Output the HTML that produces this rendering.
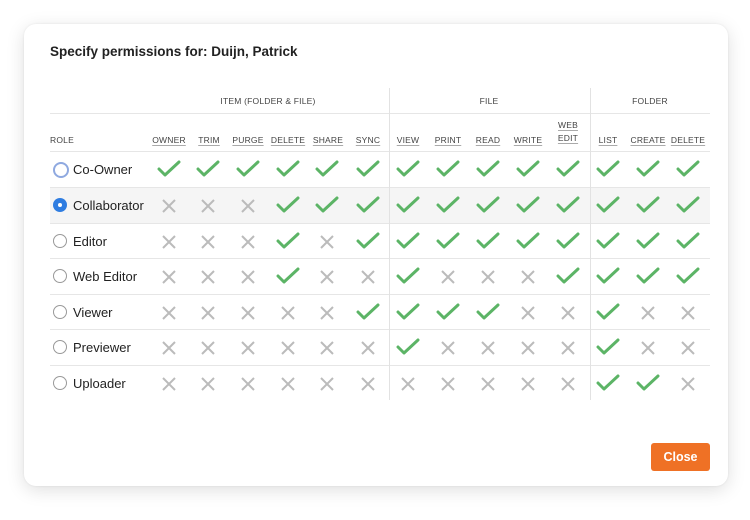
<!DOCTYPE html>
<html><head><meta charset="utf-8"><style>
*{margin:0;padding:0;box-sizing:border-box}
body{width:750px;height:520px;background:#fff;font-family:"Liberation Sans",sans-serif;position:relative;overflow:hidden}
.dlg{position:absolute;left:24px;top:24px;width:704px;height:462px;background:#fff;border-radius:12px;box-shadow:0 4px 18px rgba(0,0,0,.13),0 0 2px rgba(0,0,0,.08)}
.t{position:absolute;left:50px;top:44px;font-size:13.5px;font-weight:bold;color:#222}
.h{position:absolute;font-size:8.5px;color:#444;text-align:center;letter-spacing:.2px;transform:translateX(-50%);white-space:nowrap}
.u{text-decoration:underline;text-decoration-color:#aaa;text-underline-offset:2px}
.line{position:absolute;left:50px;width:660px;height:1px;background:#e6e6e6}
.vl{position:absolute;width:1px;background:#e2e2e2;top:88px;height:312px}
.row{position:absolute;left:50px;width:660px;height:36px}
.rad{position:absolute;left:3px;top:11px;width:14px;height:14px;border:1px solid #999;border-radius:50%;background:#fff}
</style></head><body>
<svg width="0" height="0" style="position:absolute"><defs>
<symbol id="c" viewBox="0 0 24 18"><path d="M2 9 L8 15 L22 2" fill="none" stroke="#5cb466" stroke-width="3" stroke-linecap="round" stroke-linejoin="round"/></symbol>
<symbol id="x" viewBox="0 0 14 14"><path d="M1 1 L13 13 M13 1 L1 13" fill="none" stroke="#bbb" stroke-width="2"/></symbol>
</defs></svg>
<div class="dlg"></div>
<div class="t">Specify permissions for: Duijn, Patrick</div>
<div class="h" style="left:268px;top:96px">ITEM (FOLDER &amp; FILE)</div>
<div class="h" style="left:489px;top:96px">FILE</div>
<div class="h" style="left:650px;top:96px">FOLDER</div>
<div class="line" style="top:113px"></div>
<div class="h" style="left:62px;top:135px">ROLE</div>
<div class="h u" style="left:169px;top:135px">OWNER</div>
<div class="h u" style="left:209px;top:135px">TRIM</div>
<div class="h u" style="left:248px;top:135px">PURGE</div>
<div class="h u" style="left:288px;top:135px">DELETE</div>
<div class="h u" style="left:328px;top:135px">SHARE</div>
<div class="h u" style="left:368px;top:135px">SYNC</div>
<div class="h u" style="left:408px;top:135px">VIEW</div>
<div class="h u" style="left:448px;top:135px">PRINT</div>
<div class="h u" style="left:488px;top:135px">READ</div>
<div class="h u" style="left:528px;top:135px">WRITE</div>
<div class="h u" style="left:568px;top:119px;line-height:13px">WEB<br>EDIT</div>
<div class="h u" style="left:608px;top:135px">LIST</div>
<div class="h u" style="left:648px;top:135px">CREATE</div>
<div class="h u" style="left:688px;top:135px">DELETE</div>
<div class="line" style="top:151px"></div>
<div class="row" style="top:187px;height:36px;background:#f5f5f5"></div>
<div class="line" style="top:187px"></div>
<div class="line" style="top:223px"></div>
<div class="line" style="top:258px"></div>
<div class="line" style="top:294px"></div>
<div class="line" style="top:329px"></div>
<div class="line" style="top:365px"></div>
<div class="vl" style="left:389px"></div>
<div class="vl" style="left:590px"></div>
<div id="rows"></div>
<div style="position:absolute;left:651px;top:443px;width:59px;height:28px;background:#ef7125;border-radius:3px;color:#fff;font-size:12.5px;font-weight:bold;text-align:center;line-height:28px">Close</div>
<script>
var names=["Co-Owner","Collaborator","Editor","Web Editor","Viewer","Previewer","Uploader"];
var m=["cccccccccccccc","xxxccccccccccc","xxxcxccccccccc","xxxcxxcxxxcccc","xxxxxccccxxcxx","xxxxxxcxxxxcxx","xxxxxxxxxxxccx"];
var cx=[169,208,248,288,327,368,408,448,488,528,568,608,648,688];
var tops=[151,187,223,258,294,329,365],h="";
for(var r=0;r<7;r++){var t=tops[r];
var rad=r==0?'<div class="rad" style="left:53px;top:'+(t+11)+'px;width:16px;height:16px;border:2.5px solid #8fa9e0"></div>':r==1?'<div class="rad" style="left:53px;top:'+(t+11)+'px;border:none;background:#2f7de1"><div style="position:absolute;left:5px;top:5px;width:4px;height:4px;border-radius:50%;background:#fff"></div></div>':'<div class="rad" style="left:53px;top:'+(t+11)+'px"></div>';
h+=rad+'<div style="position:absolute;left:73px;top:'+(t+11)+'px;font-size:13px;color:#222">'+names[r]+'</div>';
for(var c=0;c<14;c++){var k=m[r][c];
if(k=="c")h+='<svg style="position:absolute;left:'+(cx[c]-12)+'px;top:'+(t+9)+'px" width="24" height="18"><use href="#c"/></svg>';
else h+='<svg style="position:absolute;left:'+(cx[c]-7)+'px;top:'+(t+12)+'px" width="14" height="14"><use href="#x"/></svg>';}}
document.getElementById("rows").innerHTML=h;
</script>
</body></html>
